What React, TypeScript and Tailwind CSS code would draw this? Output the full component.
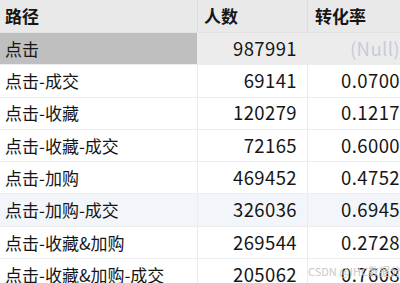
import React from "react";

const rows: { path: string; n: string; r: string; null?: boolean; sel?: boolean; hover?: boolean }[] = [
  { path: "点击", n: "987991", r: "(Null)", null: true, sel: true },
  { path: "点击-成交", n: "69141", r: "0.0700" },
  { path: "点击-收藏", n: "120279", r: "0.1217" },
  { path: "点击-收藏-成交", n: "72165", r: "0.6000" },
  { path: "点击-加购", n: "469452", r: "0.4752" },
  { path: "点击-加购-成交", n: "326036", r: "0.6945", hover: true },
  { path: "点击-收藏&加购", n: "269544", r: "0.2728" },
  { path: "点击-收藏&加购-成交", n: "205062", r: "0.7608" },
];

export default function App() {
  return (
    <div
      className="relative w-[400px] h-[283px] overflow-hidden bg-white text-[17px] text-[#161616]"
      style={{ fontFamily: '"Noto Sans CJK SC", "Noto Sans", sans-serif' }}
    >
      <div className="w-[430px]">
        <div className="flex h-[33px] bg-[#e9e9e9] font-bold items-center border-b border-[#e2e2e2]">
          <div className="w-[198px] pl-[5px] h-full flex items-center border-r border-[#dcdcdc]">路径</div>
          <div className="w-[110px] pl-[6px] h-full flex items-center border-r border-[#dcdcdc]">人数</div>
          <div className="flex-1 pl-[7px] h-full flex items-center">转化率</div>
        </div>
        {rows.map((row, i) => (
          <div
            key={i}
            className={
              "flex h-[32.3px] items-center border-b border-[#ededed] " +
              (row.sel ? "bg-[#ececec]" : row.hover ? "bg-[#f2f6fb]" : "bg-white")
            }
          >
            <div
              className={
                "w-[198px] pl-[5px] h-full flex items-center border-r border-[#ececec] " +
                (row.sel ? "bg-[#bfbfbf]" : "")
              }
            >
              {row.path}
            </div>
            <div className="w-[110px] pr-[10px] h-full flex items-center justify-end border-r border-[#ececec] text-[18.5px] tracking-[0.4px]">
              {row.n}
            </div>
            <div
              className={
                "w-[92px] h-full flex items-center justify-end whitespace-nowrap text-[18.5px] tracking-[0.4px] " +
                (row.null ? "text-[#c5ccd8]" : "")
              }
            >
              {row.r}
            </div>
          </div>
        ))}
      </div>
      <div className="absolute left-[308px] top-[263px] text-[11px] text-[#c8c8c8] whitespace-nowrap">
        CSDN @IHC数据分析
      </div>
    </div>
  );
}
